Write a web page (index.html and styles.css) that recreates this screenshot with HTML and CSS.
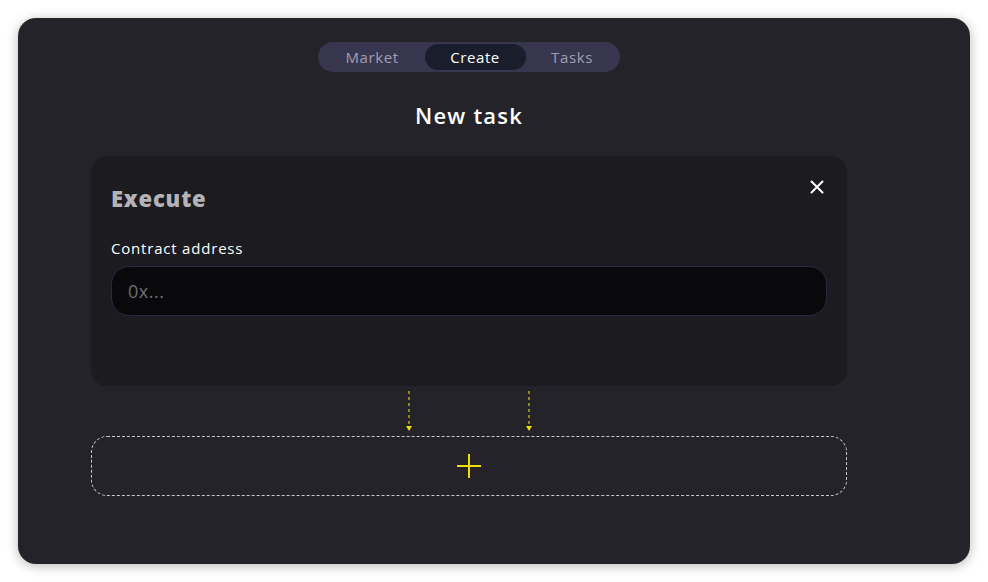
FILE: index.html
```html
<!DOCTYPE html>
<html>
<head>
<meta charset="utf-8">
<link rel="stylesheet" href="styles.css">
</head>
<body>
<div class="frame">
  <nav class="tabs">
    <span class="tab">Market</span>
    <span class="tab active">Create</span>
    <span class="tab">Tasks</span>
  </nav>
  <h1 class="title">New task</h1>
  <section class="card">
    <div class="card-head">
      <h2 class="card-title">Execute</h2>
      <button class="close" aria-label="Close">
        <svg width="14" height="14" viewBox="0 0 14 14"><path d="M1.5 1.5L12.5 12.5M12.5 1.5L1.5 12.5" stroke="#fff" stroke-width="2" stroke-linecap="round"/></svg>
      </button>
    </div>
    <label class="label">Contract address</label>
    <div class="input">0x...</div>
  </section>
  <div class="connectors">
    <svg width="8" height="42" viewBox="0 0 8 42"><path d="M4 1V37" stroke="#c9bd1a" stroke-width="1.3" stroke-dasharray="3 3"/><path d="M1 36H7L4 41Z" fill="#f0e000"/></svg>
    <svg width="8" height="42" viewBox="0 0 8 42"><path d="M4 1V37" stroke="#c9bd1a" stroke-width="1.3" stroke-dasharray="3 3"/><path d="M1 36H7L4 41Z" fill="#f0e000"/></svg>
  </div>
  <div class="add">
    <svg width="26" height="26" viewBox="0 0 26 26"><path d="M13 1V25M1 13H25" stroke="#eedd00" stroke-width="2"/></svg>
  </div>
</div>
</body>
</html>
```
FILE: styles.css
```css
* { box-sizing: border-box; }
html, body { margin: 0; padding: 0; background: #ffffff; }
body {
  width: 988px; height: 582px;
  padding: 18px;
  font-family: "Open Sans", "Noto Sans", sans-serif;
}
.frame {
  width: 952px; height: 546px;
  background: #242329;
  border-radius: 18px;
  box-shadow: 0 2px 12px rgba(0,0,0,0.28);
  display: flex; flex-direction: column; align-items: center;
  padding-top: 24px;
  padding-right: 50px;
}
.tabs {
  display: flex; align-items: center;
  width: 302px; height: 30px;
  background: #38364f;
  border-radius: 15px;
  padding: 0 2px;
  justify-content: space-between;
}
.tab {
  flex: 1;
  text-align: center;
  color: #a09fb0;
  font-size: 15px;
  letter-spacing: 0.6px;
  line-height: 26px;
}
.tab:first-child { flex: 0 0 104px; }
.tab:last-child { flex: 0 0 92px; }
.tab.active {
  flex: 0 0 101px;
  background: #1a1d2c;
  color: #ffffff;
  border-radius: 13px;
}
.title {
  margin: 28px 0 0;
  color: #ffffff;
  font-size: 22px;
  font-weight: 600;
  letter-spacing: 1.2px;
  line-height: 30px;
}
.card {
  margin-top: 26px;
  width: 756px; height: 230px;
  background: #1c1b20;
  border-radius: 16px;
  padding: 28px 20px 0 20px;
}
.card-head { display: flex; justify-content: space-between; align-items: flex-start; }
.card-title {
  margin: 0;
  color: #b4b4b8;
  font-size: 22px;
  font-weight: 800;
  letter-spacing: 0.8px;
  line-height: 28px;
}
.close {
  background: none; border: 0; padding: 0;
  margin: -4px 3px 0 0;
  width: 14px; height: 14px;
  display: flex;
}
.label {
  display: block;
  margin-top: 26px;
  color: #ffffff;
  font-size: 15px;
  letter-spacing: 0.8px;
  line-height: 20px;
}
.input {
  margin-top: 8px;
  height: 50px;
  background: #09090b;
  border: 1px solid #2a2944;
  border-radius: 18px;
  padding-left: 16px;
  color: #707074;
  font-size: 18px;
  letter-spacing: 0.5px;
  line-height: 48px;
}
.connectors {
  display: flex; gap: 112px;
  margin-top: 4px;
  height: 44px;
}
.add {
  margin-top: 2px;
  width: 756px; height: 60px;
  border: 1px dashed #c8c8cc;
  border-radius: 16px;
  display: flex; align-items: center; justify-content: center;
}
```
